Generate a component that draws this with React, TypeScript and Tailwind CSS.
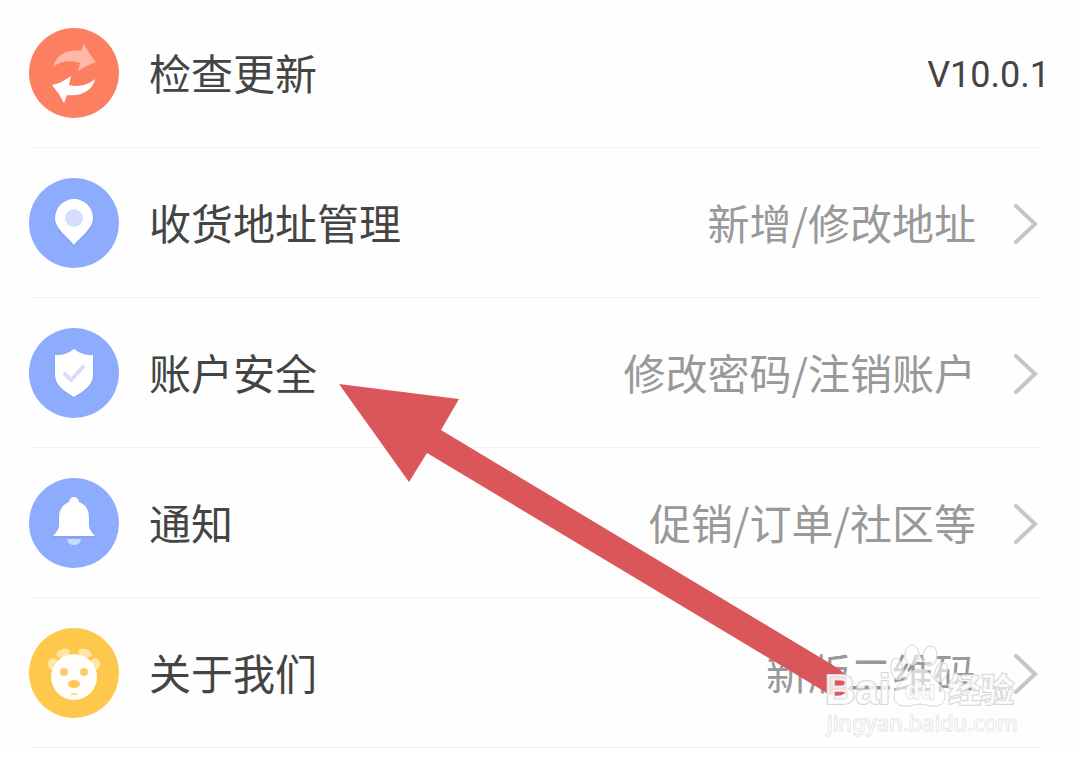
import type { ReactNode } from 'react';

function Disc({ className, children }: { className: string; children: ReactNode }) {
  return (
    <span className={`flex size-[90px] shrink-0 rounded-full ${className}`}>
      <svg viewBox="0 0 90 90" className="size-full" aria-hidden="true">
        {children}
      </svg>
    </span>
  );
}

const updateIcon = (
  <Disc className="bg-[#fd7f62]">
    <path d="M24 39C27 27 38 21 52 23L55 16Q61 27 67 34Q58 37 49 43L51 35C40 32 32 33 24 39Z" fill="#ffb8a8" />
    <path d="M66 51C64 62 52 69 38 67L35 75Q30 65 23 57Q33 55 42 48L40 57C49 59 58 58 66 51Z" fill="#fff" />
  </Disc>
);

const addressIcon = (
  <Disc className="bg-[#8eacfe]">
    <path d="M45 68C40 61 25 52 25 40A20 20 0 0 1 65 40C65 52 50 61 45 68Z" fill="#7799ed" opacity=".5" transform="translate(0 1)" />
    <path d="M45 67C40 60 26 51 26 40A19 19 0 0 1 64 40C64 51 50 60 45 67Z" fill="#fff" />
    <circle cx="45" cy="40" r="9" fill="#d4dffc" />
  </Disc>
);

const securityIcon = (
  <Disc className="bg-[#8eacfe]">
    <path d="M45 22Q54 29 65 28V48C65 59 53 65 45 70C37 65 25 59 25 48V28Q36 29 45 22Z" fill="#7799ed" opacity=".5" />
    <path d="M45 21Q54 28 64 27V47C64 58 53 64 45 69C37 64 26 58 26 47V27Q36 28 45 21Z" fill="#fff" />
    <path d="M36 46L42 52L54 39" fill="none" stroke="#dbdcf7" strokeWidth="4" strokeLinecap="round" strokeLinejoin="round" />
  </Disc>
);

const noticeIcon = (
  <Disc className="bg-[#8eacfe]">
    <path d="M38 61H52Q51 67 45 67Q39 67 38 61Z" fill="#cadafe" />
    <path d="M40 25A5 5 0 0 1 50 25Q61 29 61 40V49Q62 53 66 57V60H24V57Q28 53 29 49V40Q29 29 40 25Z" fill="#7799ed" opacity=".4" />
    <path d="M40 24A5 5 0 0 1 50 24Q60 28 60 39V48Q61 53 66 58H24Q29 53 30 48V39Q30 28 40 24Z" fill="#fff" />
  </Disc>
);

const aboutIcon = (
  <Disc className="bg-[#fec84c]">
    <g fill="#ffe7a9">
      <ellipse cx="24" cy="36" rx="5" ry="6" />
      <ellipse cx="34" cy="25" rx="7" ry="4" transform="rotate(-20 34 25)" />
      <ellipse cx="56" cy="25" rx="7" ry="4" transform="rotate(20 56 25)" />
      <ellipse cx="66" cy="36" rx="5" ry="6" />
    </g>
    <circle cx="45" cy="49" r="23" fill="#fffefa" />
    <circle cx="35" cy="44" r="4" fill="#fbd06c" />
    <circle cx="55" cy="44" r="4" fill="#fbd06c" />
    <ellipse cx="45" cy="56" rx="6" ry="4" fill="#fdc858" />
    <path d="M42 66H48" stroke="#fbd98b" strokeWidth="2" />
  </Disc>
);

const rows = [
  { title: '收货地址管理', hint: '新增/修改地址', icon: addressIcon },
  { title: '账户安全', hint: '修改密码/注销账户', icon: securityIcon },
  { title: '通知', hint: '促销/订单/社区等', icon: noticeIcon },
  { title: '关于我们', hint: '新版二维码', icon: aboutIcon },
];

function Chevron() {
  return (
    <svg viewBox="0 0 28 42" className="ml-9 h-[42px] w-7 shrink-0" aria-hidden="true">
      <path d="M4 4L23 22L4 40" fill="none" stroke="#c6c6c6" strokeWidth="4" strokeLinecap="round" />
    </svg>
  );
}

function PointerArrow() {
  return (
    <svg viewBox="0 0 510 316" className="pointer-events-none absolute top-[383px] left-[338px] h-[316px] w-[510px]" aria-hidden="true">
      <path d="M1 1L121 16L103 47L498 284Q509 291 509 298V307Q506 315 492 312L474 301L89 70L71 99Z" fill="#db565b" />
    </svg>
  );
}

function Watermark() {
  return (
    <svg viewBox="0 0 204 98" className="pointer-events-none absolute top-[642px] right-[50px] h-[98px] w-[204px]" role="img" aria-label="Baidu经验">
      <g fill="#fff" fillOpacity=".6" stroke="#d6d6d6" strokeWidth="1">
        <ellipse cx="90" cy="13" rx="7" ry="10" />
        <ellipse cx="108" cy="14" rx="7" ry="10" transform="rotate(8 108 14)" />
        <ellipse cx="75" cy="27" rx="6" ry="11" transform="rotate(-10 75 27)" />
        <ellipse cx="119" cy="30" rx="6" ry="10" transform="rotate(16 119 30)" />
        <path d="M98 27C88 27 85 36 78 42C69 50 70 64 82 64C88 65 93 62 98 62C103 62 108 65 114 64C125 63 126 50 117 42C110 36 108 27 98 27Z" />
      </g>
      <g fill="#fff" fillOpacity=".8" stroke="#d6d6d6" strokeWidth="2" paintOrder="stroke" className="font-['Liberation_Sans','Noto_Sans_CJK_SC',sans-serif]">
        <text x="3" y="62" fontSize="42" fontWeight="700">Bai</text>
        <text x="83" y="57" fontSize="25" fontWeight="700" strokeWidth="1">du</text>
        <text x="126" y="60" fontSize="33" fontWeight="700">经验</text>
        <text x="5" y="89" fontSize="22" strokeWidth="1" className="font-['Noto_Sans',sans-serif]">jingyan.baidu.com</text>
      </g>
    </svg>
  );
}

export default function App() {
  return (
    <main className="relative bg-[#fefefe] pr-9 pl-[29px] font-['Noto_Sans_CJK_SC',sans-serif] text-[42px] leading-[60px] text-[#444]">
      <ul>
        <li className="flex h-[148px] items-center border-b border-[#f2f2f2] pb-px">
          {updateIcon}
          <span className="ml-[30px] pb-0.5">检查更新</span>
          <span className="-mr-2.5 ml-auto pt-1 font-[Roboto,sans-serif] text-[36px]">V10.0.1</span>
        </li>
        {rows.map((row) => (
          <li key={row.title} className="border-b border-[#f2f2f2]">
            <button type="button" className="flex h-[149px] w-full items-center text-left">
              {row.icon}
              <span className="ml-[30px] pb-0.5">{row.title}</span>
              <span className="ml-auto pb-0.5 text-[#999]">{row.hint}</span>
              <Chevron />
            </button>
          </li>
        ))}
      </ul>
      <PointerArrow />
      <Watermark />
    </main>
  );
}
